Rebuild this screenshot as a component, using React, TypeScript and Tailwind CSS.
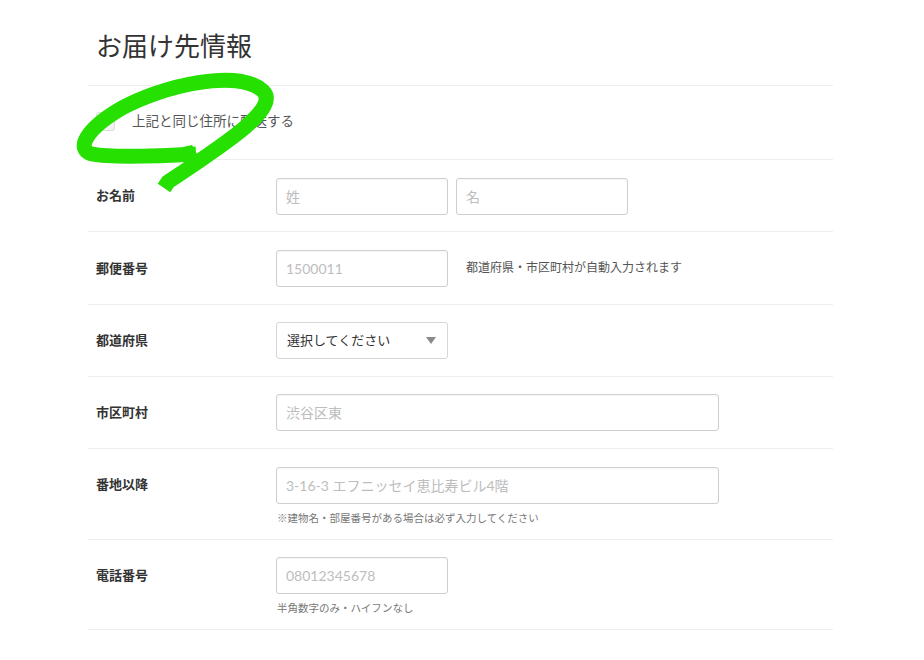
import type { ReactNode } from "react";

const font = { fontFamily: 'Lato, "Noto Sans CJK JP", sans-serif' };

const inputCls =
  "h-[37px] rounded-[3px] border border-[#cfcfcf] bg-white px-[9px] text-[14px] text-[#333] outline-none shadow-[inset_0_1px_2px_rgba(0,0,0,0.04)] placeholder:text-[#bdbdbd]";

function Row({
  label,
  children,
  note,
}: {
  label: string;
  children: ReactNode;
  note?: string;
}) {
  return (
    <div
      className={
        "border-b border-[#eeeeee] pl-[8px] pt-[17.5px] " + (note ? "pb-[13px]" : "pb-[16.75px]")
      }
    >
      <div className="flex items-center">
        <div className="w-[180px] shrink-0 text-[13px] font-bold text-[#333]">{label}</div>
        <div className="flex items-center">{children}</div>
      </div>
      {note && (
        <div className="ml-[181px] mt-[6px] text-[10.5px] leading-[16px] text-[#777]">{note}</div>
      )}
    </div>
  );
}

function Swoosh() {
  return (
    <svg
      className="pointer-events-none absolute left-0 top-0"
      width="924"
      height="660"
      viewBox="0 0 924 660"
    >
      <path
        d="M 196 154 C 160 156, 112 158, 92 154 C 76 150, 84 130, 122 108 C 162 86, 238 68, 263 91 C 280 108, 228 142, 168 182 L 164 188"
        fill="none"
        stroke="#25e000"
        strokeWidth="15"
        strokeLinecap="butt"
        strokeLinejoin="miter"
      />
      <path d="M 183 147 L 192 145 L 198 156 L 186 158 Z" fill="#25e000" />
    </svg>
  );
}

export default function App() {
  return (
    <div className="relative h-[660px] w-[924px] bg-white" style={font}>
      <div className="ml-[88px] w-[745px]">
        <div className="border-b border-[#eeeeee] pb-[21px] pl-[8px] pt-[29px]">
          <h1 className="text-[26px] font-normal leading-[35px] text-[#333]">お届け先情報</h1>
        </div>

        <div className="flex items-center border-b border-[#eeeeee] pb-[28px] pl-[8px] pt-[25px]">
          <span className="h-[19px] w-[19px] rounded-[3px] border border-[#dcdcdc] bg-[#f2f2f2]" />
          <span className="ml-[17px] text-[13.5px] leading-[20px] text-[#555]">上記と同じ住所に配送する</span>
        </div>

        <Row label="お名前">
          <input className={inputCls + " w-[172px]"} placeholder="姓" />
          <input className={inputCls + " ml-[8px] w-[172px]"} placeholder="名" />
        </Row>

        <Row label="郵便番号">
          <input className={inputCls + " w-[172px]"} placeholder="1500011" />
          <span className="ml-[18px] text-[12px] text-[#555]">都道府県・市区町村が自動入力されます</span>
        </Row>

        <Row label="都道府県">
          <div className="flex h-[37px] w-[172px] items-center justify-between rounded-[3px] border border-[#d6d6d6] bg-white pl-[10px] pr-[11px] text-[13px] text-[#333]">
            <span>選択してください</span>
            <span className="h-0 w-0 border-x-[5.5px] border-t-[7px] border-x-transparent border-t-[#8a8a8a]" />
          </div>
        </Row>

        <Row label="市区町村">
          <input className={inputCls + " w-[443px] text-[13.5px]"} placeholder="渋谷区東" />
        </Row>

        <Row label="番地以降" note="※建物名・部屋番号がある場合は必ず入力してください">
          <input className={inputCls + " w-[443px] text-[13.5px]"} placeholder="3-16-3 エフニッセイ恵比寿ビル4階" />
        </Row>

        <Row label="電話番号" note="半角数字のみ・ハイフンなし">
          <input className={inputCls + " w-[172px]"} placeholder="08012345678" />
        </Row>
      </div>
      <Swoosh />
    </div>
  );
}
